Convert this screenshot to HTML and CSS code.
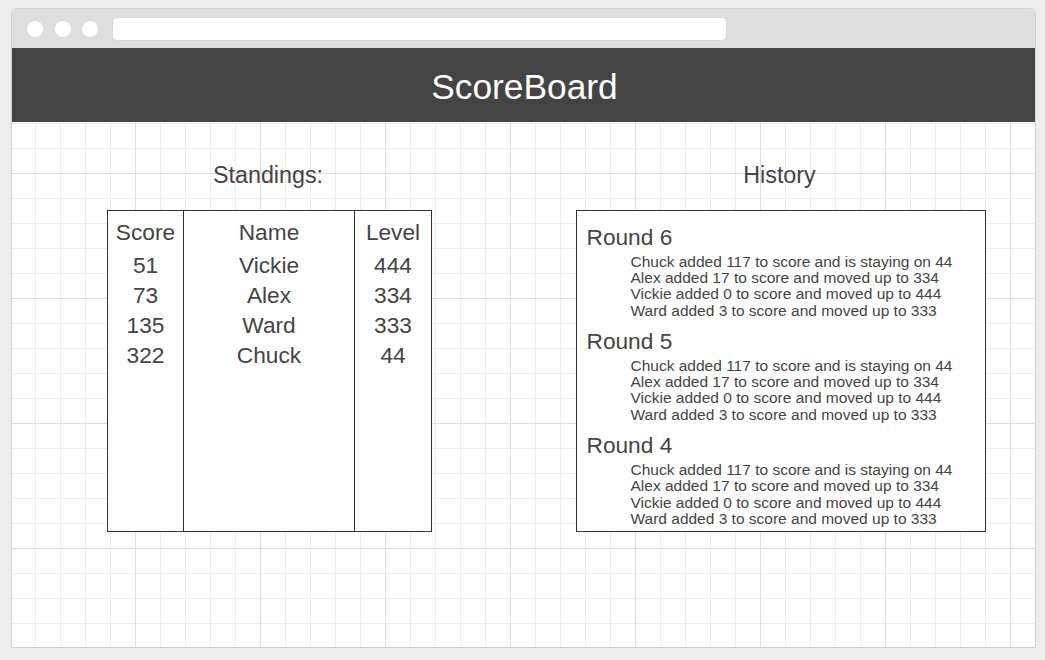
FILE: index.html
```html
<!DOCTYPE html>
<html lang="en">
<head>
<meta charset="utf-8">
<title>ScoreBoard</title>
<link rel="stylesheet" href="styles.css">
</head>
<body>
<div class="window">
  <div class="titlebar">
    <span class="dot"></span><span class="dot"></span><span class="dot"></span>
    <div class="address"></div>
  </div>
  <header class="app-header"><h1>ScoreBoard</h1></header>
  <main class="canvas">
    <section class="panel">
      <h2 class="panel-title">Standings:</h2>
      <div class="standings">
        <div class="col col-score">
          <div class="col-head">Score</div>
          <div>51</div><div>73</div><div>135</div><div>322</div>
        </div>
        <div class="col col-name">
          <div class="col-head">Name</div>
          <div>Vickie</div><div>Alex</div><div>Ward</div><div>Chuck</div>
        </div>
        <div class="col col-level">
          <div class="col-head">Level</div>
          <div>444</div><div>334</div><div>333</div><div>44</div>
        </div>
      </div>
    </section>
    <section class="panel">
      <h2 class="panel-title">History</h2>
      <div class="history">
        <div class="round">
          <h3 class="round-title">Round 6</h3>
          <ul class="events">
            <li>Chuck added 117 to score and is staying on 44</li>
            <li>Alex added 17 to score and moved up to 334</li>
            <li>Vickie added 0 to score and moved up to 444</li>
            <li>Ward added 3 to score and moved up to 333</li>
          </ul>
        </div>
        <div class="round">
          <h3 class="round-title">Round 5</h3>
          <ul class="events">
            <li>Chuck added 117 to score and is staying on 44</li>
            <li>Alex added 17 to score and moved up to 334</li>
            <li>Vickie added 0 to score and moved up to 444</li>
            <li>Ward added 3 to score and moved up to 333</li>
          </ul>
        </div>
        <div class="round">
          <h3 class="round-title">Round 4</h3>
          <ul class="events">
            <li>Chuck added 117 to score and is staying on 44</li>
            <li>Alex added 17 to score and moved up to 334</li>
            <li>Vickie added 0 to score and moved up to 444</li>
            <li>Ward added 3 to score and moved up to 333</li>
          </ul>
        </div>
      </div>
    </section>
  </main>
</div>
</body>
</html>
```

FILE: styles.css
```css
* { box-sizing: border-box; }

html, body {
  margin: 0;
  padding: 0;
  background: #ececec;
  font-family: "Liberation Sans", Arial, sans-serif;
  color: #444;
}

body {
  padding: 8px 0 0 11px;
  height: 660px;
  overflow: hidden;
}

.window {
  width: 1025px;
  height: 640px;
  border: 1px solid #d2d2d2;
  border-radius: 6px 6px 0 0;
  background: #fff;
  display: flex;
  flex-direction: column;
  overflow: hidden;
}

.titlebar {
  height: 39px;
  flex: none;
  background: #dedede;
  display: flex;
  align-items: center;
  padding-left: 15px;
  gap: 11.5px;
}

.dot {
  width: 16px;
  height: 16px;
  border-radius: 50%;
  background: #fff;
  flex: none;
}

.address {
  width: 615px;
  height: 24px;
  margin-left: 2px;
  background: #fff;
  border-radius: 5px;
  border: 1px solid #d6d6d6;
}

.app-header {
  height: 74px;
  flex: none;
  background: #444;
  display: flex;
  align-items: center;
  justify-content: center;
}

.app-header h1 {
  margin: 4px 0 0 2px;
  font-weight: normal;
  font-size: 35.3px;
  color: #fff;
}

.canvas {
  flex: 1;
  display: grid;
  grid-template-columns: 512px 511px;
  align-items: start;
  padding-top: 38px;
  background-color: #fff;
  background-image:
    linear-gradient(to right, #dedede 1px, transparent 1px),
    linear-gradient(to bottom, #dedede 1px, transparent 1px),
    linear-gradient(to right, #ededed 1px, transparent 1px),
    linear-gradient(to bottom, #ededed 1px, transparent 1px);
  background-size: 125px 125px, 125px 125px, 25px 25px, 25px 25px;
  background-position: 123px 0, 0 51px, 23px 0, 0 1px;
}

.panel {
  display: flex;
  flex-direction: column;
  align-items: center;
}

.panel-title {
  margin: 0 0 20px 0;
  font-weight: normal;
  font-size: 23.3px;
  line-height: 30px;
}

.standings {
  margin-left: 3px;
  width: 325px;
  height: 322px;
  border: 1px solid #333;
  display: grid;
  grid-template-columns: 75px 171px 77px;
  font-size: 22.7px;
  line-height: 30px;
  text-align: center;
  background: #fff;
}

.col {
  padding-top: 6px;
}

.col + .col {
  border-left: 1px solid #333;
}

.col-head {
  margin-bottom: 3px;
}

.history {
  margin-left: 2px;
  width: 410px;
  height: 322px;
  border: 1px solid #333;
  background: #fff;
  padding: 12.5px 0 0 10px;
}

.round-title {
  margin: 0 0 4px 0;
  font-weight: normal;
  font-size: 22.7px;
  line-height: 26px;
}

.events {
  list-style: none;
  margin: 0 0 8.5px 44px;
  padding: 0;
  font-size: 15.5px;
  line-height: 16.4px;
}
```
